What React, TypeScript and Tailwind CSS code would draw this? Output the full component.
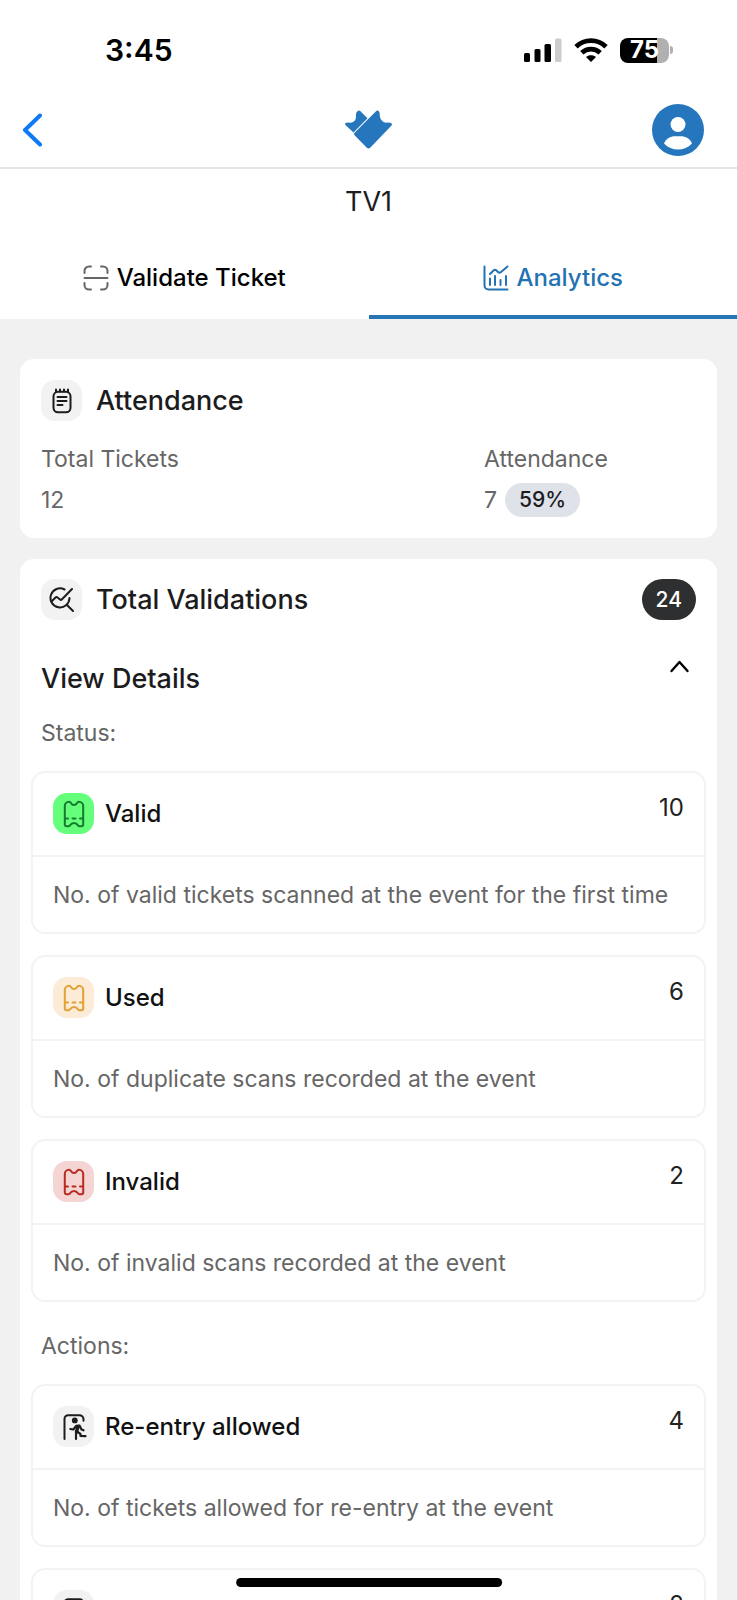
import React from 'react';

type Tone = 'valid' | 'used' | 'invalid' | 'neutral';

interface DetailItem {
  title: string;
  count: number;
  description: string;
  tone: Tone;
}

const toneClasses: Record<Tone, string> = {
  valid: 'bg-[#66ff7c] text-[#157a2c]',
  used: 'bg-[#fbebd7] text-[#e3a036]',
  invalid: 'bg-[#f4d5d3] text-[#b92b20]',
  neutral: 'bg-[#f2f2f2] text-[#1c1c1e]',
};

const statusItems: DetailItem[] = [
  { title: 'Valid', count: 10, description: 'No. of valid tickets scanned at the event for the first time', tone: 'valid' },
  { title: 'Used', count: 6, description: 'No. of duplicate scans recorded at the event', tone: 'used' },
  { title: 'Invalid', count: 2, description: 'No. of invalid scans recorded at the event', tone: 'invalid' },
];

const actionItems: DetailItem[] = [
  { title: 'Re-entry allowed', count: 4, description: 'No. of tickets allowed for re-entry at the event', tone: 'neutral' },
  { title: 'Session end', count: 2, description: 'No. of tickets marked as exit at the event', tone: 'neutral' },
];

const SignalIcon = () => (
  <svg width="38" height="24" viewBox="0 0 38 24" fill="currentColor">
    <rect x="0" y="15" width="6" height="9" rx="1.5" />
    <rect x="10.5" y="11" width="6" height="13" rx="1.5" />
    <rect x="20.5" y="6" width="6.5" height="18" rx="1.5" />
    <rect x="31" y="0.5" width="6.5" height="23.5" rx="1.5" fill="#cccccc" />
  </svg>
);

const WifiIcon = () => (
  <svg width="34" height="24" viewBox="0 0 34 24" fill="none" stroke="currentColor" strokeWidth="4.8">
    <path d="M2 8.8C10.5 .6 23.5 .6 32 8.8" />
    <path d="M7.8 14.8c5.2-4.9 13.2-4.9 18.4 0" />
    <path d="M17 24l-5-5c2.8-2.5 7.2-2.5 10 0z" fill="currentColor" stroke="none" />
  </svg>
);

const LogoIcon = () => (
  <svg width="50" height="40" viewBox="0 0 50 40" fill="#2676bd">
    <path d="M14.5 1.2q1.5-1.5 3 0L24.500 8.200 10.500 22.500 2.700 15.300q-1.500-1.500 .5-2.500 2-.6 4.500-.1 5.500-.8 5.300-6.700-.6-3 1.500-4.800z" />
    <path d="M33 1.200q1.600-1.500 3 .2 1 1.300 .7 4 .6 6.200 6.300 7.300 3-.6 5 .3 1.800 1.200 .3 2.700L27.200 37.800q-1.700 1.500-3.400 0L11.800 25.500q-1.500-1.500 0-3z" />
  </svg>
);

const AvatarIcon = () => (
  <svg width="52" height="52" viewBox="0 0 52 52">
    <circle cx="26" cy="26" r="26" fill="#2676bd" />
    <circle cx="26" cy="20.5" r="7.5" fill="#fff" />
    <path d="M12 39.5c2-4.700 6.500-7.200 11-7.200h6c4.500 0 9 2.500 11 7.200-7.500 8-20.500 8-28 0z" fill="#fff" />
  </svg>
);

const ScanIcon = () => (
  <svg width="26" height="26" viewBox="0 0 26 26" fill="none" stroke="#666" strokeWidth="2" strokeLinecap="round">
    <path d="M1.500 8V6A4.500 4.500 0 0 1 6 1.500h2M18 1.500h2A4.500 4.500 0 0 1 24.500 6v2M24.500 18v2a4.500 4.500 0 0 1-4.500 4.500h-2M8 24.500H6A4.500 4.500 0 0 1 1.500 20v-2M1.500 13h23" />
  </svg>
);

const ChartIcon = () => (
  <svg width="26" height="26" viewBox="0 0 26 26" fill="none" stroke="currentColor" strokeWidth="2" strokeLinecap="round" strokeLinejoin="round">
    <path d="M1.500 1.500v19a4 4 0 0 0 4 4h19M7 13.500v6.500M12 11v9M17.500 15v5M23 11v9" />
    <path d="M7 9l3.500-3.500q1.500-1.500 3 0l1.500 1.500q1.500 1.500 3 0L24.500 1.500" />
  </svg>
);

const NoteIcon = () => (
  <svg width="26" height="26" viewBox="0 0 26 26" fill="none" stroke="currentColor" strokeWidth="2" strokeLinecap="round" strokeLinejoin="round">
    <rect x="4.500" y="3.800" width="17" height="20.500" rx="4.500" />
    <path d="M7 1.500v2M11 1.500v2M15 1.500v2M19 1.500v2M8.500 9h9M8.500 13h9M8.500 17h5" />
  </svg>
);

const AnalyzeIcon = () => (
  <svg width="26" height="26" viewBox="0 0 26 26" fill="none" stroke="currentColor" strokeWidth="2" strokeLinecap="round" strokeLinejoin="round">
    <path d="M15.500 2.500A9.500 9.500 0 1 0 20.500 11M18 18l6 6" />
    <path d="M2.500 14.500l4-4q1-1 2 0l2.500 2q1 .8 2-.2L23 2" />
  </svg>
);

const TicketIcon = () => (
  <svg width="26" height="28" viewBox="0 0 26 28" fill="none" stroke="currentColor" strokeWidth="2" strokeLinecap="round" strokeLinejoin="round">
    <path d="M8.200 1.700c1 0 1.400.8 1.900 1.600 1.400 2.400 4.400 2.400 5.800 0 .5-.8.900-1.600 1.900-1.600 2.400 0 4.400 2 4.400 4.400v18.400c0 1-.8 1.700-1.700 1.700h-2.200c-.8 0-1.200-.6-1.600-1.300-1.500-2.700-5.900-2.700-7.400 0-.4.700-.8 1.300-1.600 1.300H5.500c-1 0-1.700-.7-1.700-1.700V6.100c0-2.400 2-4.400 4.400-4.400z" />
    <path d="M4 18.500h3M11.500 18.500h3M19 18.500h3" />
  </svg>
);

const ExitIcon = () => (
  <svg width="26" height="28" viewBox="0 0 26 28" fill="none" stroke="currentColor" strokeLinecap="round" strokeLinejoin="round">
    <path d="M3.500 26V6a3.800 3.800 0 0 1 3.800-3.800h11.200a4 4 0 0 1 4 4v1.500" strokeWidth="2" />
    <circle cx="13.800" cy="7.400" r="2.900" fill="currentColor" stroke="none" />
    <path d="M9.300 16l3 .5 3-3.700 3.200-.3 2 4 2 .8" strokeWidth="2.200" />
    <path d="M17.200 13.500l-1.700 5" strokeWidth="3.500" />
    <path d="M15.500 18l-.5 3v5M16 18.500l3.500 2.500v2l5 .2" strokeWidth="2.200" />
  </svg>
);

const IconTile = ({ tone, children }: { tone: Tone; children: React.ReactNode }) => (
  <span className={`flex size-[41px] shrink-0 items-center justify-center rounded-[14px] ${toneClasses[tone]}`}>
    {children}
  </span>
);

const DetailCard: React.FC<{ item: DetailItem }> = ({ item }) => (
  <li className="rounded-[14px] border-2 border-[#f3f3f3]">
    <div className="flex h-[84px] items-start justify-between border-b-2 border-[#f3f3f3] px-5 pt-5">
      <div className="flex items-center gap-[11px]">
        <IconTile tone={item.tone}>{item.tone === 'neutral' ? <ExitIcon /> : <TicketIcon />}</IconTile>
        <h3 className="text-2xl leading-8 font-medium text-[#111]">{item.title}</h3>
      </div>
      <span className="text-2xl leading-[30px] text-[#222]">{item.count}</span>
    </div>
    <p className="px-5 pt-5 pb-[19px] text-[23px] leading-9 text-[#666]">{item.description}</p>
  </li>
);

export default function App() {
  return (
    <div className="flex h-screen flex-col overflow-hidden border-r border-[#d8d8d8] bg-[#f1f1f1] font-['Inter','Liberation_Sans',sans-serif] text-[#1c1c1e]">
      <header className="shrink-0 border-b-2 border-[#e5e5e5] bg-white">
        <div className="flex h-[100px] items-center justify-between pr-16 pl-[105px] text-black">
          <span className="text-3xl font-semibold">3:45</span>
          <div className="flex items-center gap-3">
            <SignalIcon />
            <WifiIcon />
            <div className="flex items-center gap-px">
              <span className="flex h-[25px] w-[49px] items-center justify-center rounded-lg bg-linear-to-r from-black from-75% to-[#b0b0b0] to-75% text-2xl leading-6 font-bold text-white">
                75
              </span>
              <span className="h-2 w-[3px] rounded-r-full bg-[#b0b0b0]" />
            </div>
          </div>
        </div>
        <div className="grid h-[67px] grid-cols-3 items-start px-[33px]">
          <button type="button" aria-label="Back" className="-ml-3 flex h-[60px] w-8 items-center">
            <svg width="22" height="34" viewBox="0 0 22 34" fill="none" stroke="#0f7af5" strokeWidth="4" strokeLinecap="round" strokeLinejoin="round">
              <path d="M19 2.500L4 17l15 14.500" />
            </svg>
          </button>
          <div className="flex h-[60px] items-center justify-center">
            <LogoIcon />
          </div>
          <button type="button" aria-label="Account" className="flex h-[60px] items-center justify-self-end">
            <AvatarIcon />
          </button>
        </div>
      </header>

      <div className="shrink-0 bg-white">
        <h1 className="pt-[15px] text-center text-[27px] leading-9">TV1</h1>
        <nav className="grid h-[99px] grid-cols-2 text-2xl font-medium">
          <button type="button" className="flex items-center justify-center gap-2 border-b-4 border-transparent pt-5 text-black">
            <ScanIcon />
            Validate Ticket
          </button>
          <button type="button" className="flex items-center justify-center gap-2 border-b-4 border-[#2676b5] pt-5 text-[#2272b4]">
            <ChartIcon />
            Analytics
          </button>
        </nav>
      </div>

      <main className="min-h-0 flex-1 overflow-hidden px-5 pt-10">
        <section className="mb-[21px] rounded-[14px] bg-white px-[21px] pt-[21px] pb-5">
          <div className="flex items-center gap-[14px]">
            <IconTile tone="neutral"><NoteIcon /></IconTile>
            <h2 className="text-[27px] leading-9 font-medium">Attendance</h2>
          </div>
          <dl className="mt-5 grid grid-cols-[23fr_11fr] text-[23px] leading-9 text-[#666]">
            <div>
              <dt>Total Tickets</dt>
              <dd className="mt-[5px]">12</dd>
            </div>
            <div>
              <dt>Attendance</dt>
              <dd className="mt-[5px] flex items-center gap-2">
                7
                <span className="rounded-full bg-[#dfe2e9] px-[14px] text-[21px] leading-[34px] font-medium text-[#1c1c1e]">59%</span>
              </dd>
            </div>
          </dl>
        </section>

        <section className="rounded-t-[14px] bg-white pt-5">
          <div className="flex items-center gap-[14px] px-[21px]">
            <IconTile tone="neutral"><AnalyzeIcon /></IconTile>
            <h2 className="flex-1 text-[27px] leading-9 font-medium">Total Validations</h2>
            <span className="rounded-full bg-[#2e2f30] px-[14px] text-[21px] leading-[41px] font-medium text-white">24</span>
          </div>
          <button type="button" aria-expanded="true" className="mt-[39px] flex w-full items-start justify-between px-[21px] text-left">
            <span className="text-[27px] leading-10 font-medium">View Details</span>
            <svg width="34" height="16" viewBox="0 0 34 16" fill="none" stroke="#000" strokeWidth="2.4" strokeLinecap="round" strokeLinejoin="round">
              <path d="M9.500 12l8-9 8 9" />
            </svg>
          </button>
          <div className="px-[11px]">
            <h3 className="mt-4 mb-5 px-[10px] text-[23px] leading-9 text-[#666]">Status:</h3>
            <ul className="flex flex-col gap-[21px]">
              {statusItems.map((item) => <DetailCard key={item.title} item={item} />)}
            </ul>
            <h3 className="mt-[26px] mb-5 px-[10px] text-[23px] leading-9 text-[#666]">Actions:</h3>
            <ul className="flex flex-col gap-[21px]">
              {actionItems.map((item) => <DetailCard key={item.title} item={item} />)}
            </ul>
          </div>
        </section>
      </main>

      <div className="fixed bottom-[13px] left-1/2 h-[9px] w-[36%] -translate-x-1/2 rounded-full bg-black" />
    </div>
  );
}
